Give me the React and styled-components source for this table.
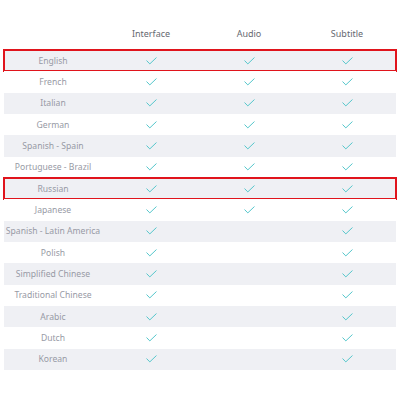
import React from "react";
import styled, { createGlobalStyle } from "styled-components";

const GlobalStyle = createGlobalStyle`
  body {
    margin: 0;
    background: #ffffff;
    font-family: "Noto Sans", "Lato", sans-serif;
  }
`;

const Table = styled.div`
  width: 392px;
  margin-left: 4px;
`;

const HeaderRow = styled.div`
  display: grid;
  grid-template-columns: repeat(4, 98px);
  height: 50px;
  align-items: start;
  padding-top: 27px;
  box-sizing: border-box;
`;

const HeaderCell = styled.div`
  text-align: center;
  font-size: 9px;
  line-height: 14px;
  color: #666971;
`;

const Row = styled.div`
  display: grid;
  grid-template-columns: repeat(4, 98px);
  height: 21.33px;
  align-items: center;
  background: ${(props) => (props.shaded ? "#eff0f4" : "#ffffff")};
  outline: ${(props) => (props.marked ? "2px solid #e0141c" : "none")};
  outline-offset: -1px;
  position: relative;
`;

const LangCell = styled.div`
  text-align: center;
  font-size: 8.6px;
  color: #979aa5;
  white-space: nowrap;
`;

const CheckCell = styled.div`
  display: flex;
  justify-content: center;
  align-items: center;
`;

const Check = () => (
  <svg width="11" height="8" viewBox="0 0 11 8">
    <polyline
      points="0.8,3.8 3.8,6.9 10.2,0.8"
      fill="none"
      stroke="#55c6cb"
      strokeWidth="1"
      strokeLinecap="round"
      strokeLinejoin="round"
    />
  </svg>
);

const rows = [
  ["English", 1, 1, 1, true],
  ["French", 1, 1, 1],
  ["Italian", 1, 1, 1],
  ["German", 1, 1, 1],
  ["Spanish - Spain", 1, 1, 1],
  ["Portuguese - Brazil", 1, 1, 1],
  ["Russian", 1, 1, 1, true],
  ["Japanese", 1, 1, 1],
  ["Spanish - Latin America", 1, 0, 1],
  ["Polish", 1, 0, 1],
  ["Simplified Chinese", 1, 0, 1],
  ["Traditional Chinese", 1, 0, 1],
  ["Arabic", 1, 0, 1],
  ["Dutch", 1, 0, 1],
  ["Korean", 1, 0, 1],
];

const App = () => {
  return (
    <>
      <GlobalStyle />
      <Table>
        <HeaderRow>
          <HeaderCell />
          <HeaderCell>Interface</HeaderCell>
          <HeaderCell>Audio</HeaderCell>
          <HeaderCell>Subtitle</HeaderCell>
        </HeaderRow>
        {rows.map(([name, ui, audio, sub, marked], i) => (
          <Row key={name} shaded={i % 2 === 0} marked={marked}>
            <LangCell>{name}</LangCell>
            <CheckCell>{ui ? <Check /> : null}</CheckCell>
            <CheckCell>{audio ? <Check /> : null}</CheckCell>
            <CheckCell>{sub ? <Check /> : null}</CheckCell>
          </Row>
        ))}
      </Table>
    </>
  );
};

export default App;
